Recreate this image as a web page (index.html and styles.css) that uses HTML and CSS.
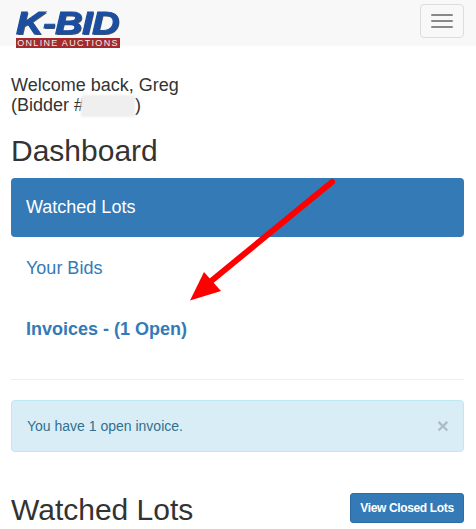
FILE: index.html
```html
<!DOCTYPE html>
<html lang="en">
<head>
    <meta charset="UTF-8">
    <meta name="viewport" content="width=device-width, initial-scale=1.0">
    <title>Dashboard</title>
    <link rel="stylesheet" href="styles.css">
</head>
<body>

<nav class="navbar">
    <a class="logo" href="#">
        <span class="logo-mark">K-BID</span>
        <span class="logo-tag">ONLINE AUCTIONS</span>
    </a>
    <button class="navbar-toggle" type="button">
        <span class="icon-bar"></span>
        <span class="icon-bar"></span>
        <span class="icon-bar"></span>
    </button>
</nav>

<div class="container">
    <p class="welcome">Welcome back, Greg<br>(Bidder #<span class="blur"></span>)</p>

    <h2 class="dash-title">Dashboard</h2>
    <ul class="pills">
        <li class="active"><a href="#">Watched Lots</a></li>
        <li><a href="#">Your Bids</a></li>
        <li><a href="#"><strong>Invoices - (1 Open)</strong></a></li>
    </ul>

    <hr>

    <div class="alert">
        <span>You have 1 open invoice.</span>
        <span class="close">×</span>
    </div>

    <div class="section-head">
        <h2>Watched Lots</h2>
        <a class="btn" href="#">View Closed Lots</a>
    </div>
</div>

<svg class="arrow" width="150" height="130" viewBox="0 0 150 130">
    <line x1="147" y1="7" x2="25" y2="107" stroke="#ff0000" stroke-width="6" stroke-linecap="round"/>
    <polygon points="5,125.5 19,97 36,116" fill="#ff0000"/>
</svg>

</body>
</html>
```

FILE: styles.css
```css
* {
    box-sizing: border-box;
}
body {
    margin: 0;
    font-family: "Liberation Sans", Arial, sans-serif;
    color: #333;
    background-color: #fff;
    position: relative;
    overflow: hidden;
}
.navbar {
    height: 46px;
    background-color: #f8f8f8;
    display: flex;
    justify-content: space-between;
    align-items: flex-start;
    padding: 4px 12px 0 16px;
}
.logo {
    display: block;
    width: 104px;
    margin-top: 8px;
    text-decoration: none;
}
.logo-mark {
    display: block;
    height: 23px;
    font-size: 32px;
    font-weight: bold;
    font-style: italic;
    line-height: 23px;
    letter-spacing: -0.5px;
    white-space: nowrap;
    color: #1c4ea0;
    -webkit-text-stroke: 1px #1c4ea0;
    text-shadow: 1px 1px 0 #555;
    transform: scaleX(1.19);
    transform-origin: left center;
}
.logo-tag {
    display: block;
    height: 10px;
    margin-top: 3px;
    background-color: #a52a2e;
    color: #eee;
    font-size: 9px;
    line-height: 10px;
    letter-spacing: 1.3px;
    text-align: center;
    white-space: nowrap;
}
.navbar-toggle {
    width: 44px;
    height: 34px;
    background: transparent;
    border: 1px solid #ddd;
    border-radius: 4px;
    padding: 0;
    display: flex;
    flex-direction: column;
    align-items: center;
    justify-content: center;
    gap: 4px;
}
.icon-bar {
    display: block;
    width: 22px;
    height: 2px;
    background-color: #888;
    border-radius: 1px;
}
.container {
    padding: 0 12px 0 11px;
}
.welcome {
    margin: 30px 0 0;
    font-size: 18px;
    line-height: 19.8px;
}
.blur {
    display: inline-block;
    width: 54px;
    height: 22px;
    margin: -3px 0 -3px -3px;
    vertical-align: -3px;
    background-color: #f0efef;
    filter: blur(1px);
}
h2 {
    margin: 0;
    font-size: 30px;
    font-weight: 500;
    line-height: 33px;
}
.dash-title {
    margin-top: 18px;
    margin-bottom: 11px;
}
.pills {
    list-style: none;
    margin: 0;
    padding: 0;
    font-size: 18px;
}
.pills li {
    margin-top: 2px;
}
.pills li:first-child {
    margin-top: 0;
}
.pills a {
    display: block;
    padding: 15px;
    line-height: 29px;
    color: #337ab7;
    text-decoration: none;
    border-radius: 4px;
}
.pills .active a {
    color: #fff;
    background-color: #337ab7;
}
hr {
    border: 0;
    border-top: 1px solid #eee;
    margin: 20px 0;
}
.alert {
    display: flex;
    justify-content: space-between;
    align-items: center;
    height: 52px;
    padding: 0 14px 0 15px;
    font-size: 14px;
    color: #31708f;
    background-color: #d9edf7;
    border: 1px solid #bce8f1;
    border-radius: 4px;
}
.close {
    font-size: 21px;
    font-weight: bold;
    color: #000;
    opacity: 0.2;
    line-height: 1;
}
.section-head {
    display: flex;
    justify-content: space-between;
    align-items: flex-start;
    margin-top: 41px;
}
.btn {
    display: block;
    width: 114px;
    padding: 5px 0;
    font-size: 12px;
    font-weight: bold;
    letter-spacing: -0.35px;
    line-height: 18px;
    text-align: center;
    color: #fff;
    background-color: #337ab7;
    border: 1px solid #2e6da4;
    border-radius: 3px;
    text-decoration: none;
}
/* annotation drawn over the page */
.arrow {
    position: absolute;
    left: 185px;
    top: 175px;
}
```
